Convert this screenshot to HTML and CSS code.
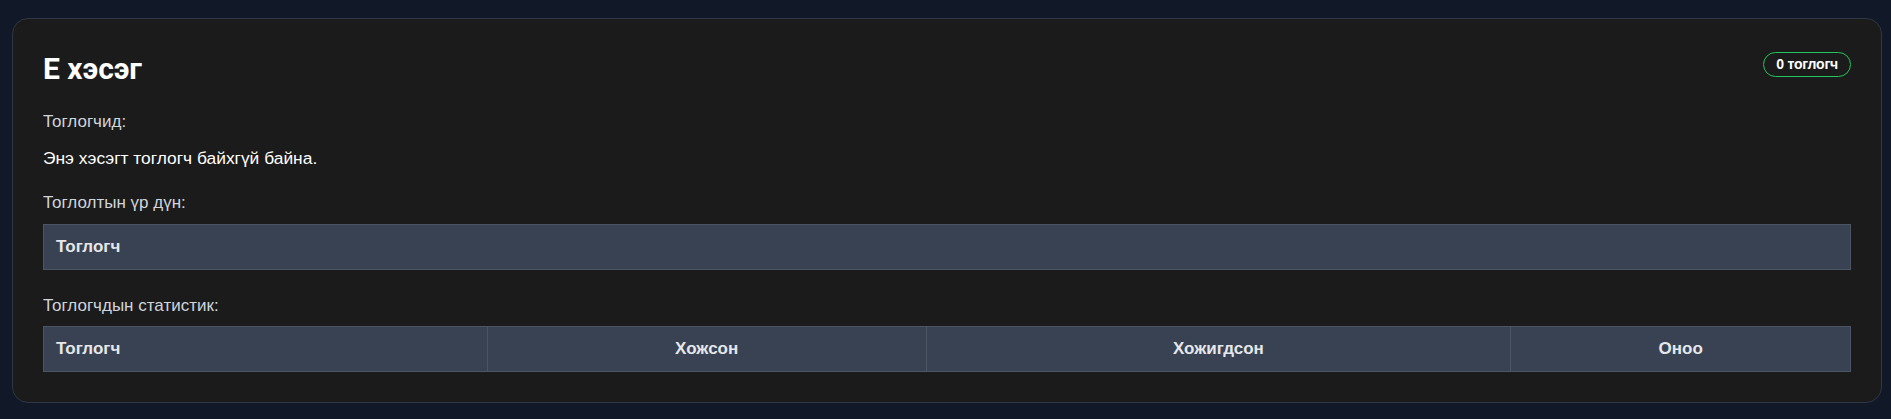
FILE: index.html
```html
<!DOCTYPE html>
<html lang="mn">
<head>
<meta charset="utf-8">
<title>Е хэсэг</title>
<link rel="stylesheet" href="styles.css">
</head>
<body>
<div class="page">
  <section class="card">
    <header class="card-head">
      <h2 class="title">Е хэсэг</h2>
      <span class="badge">0 тоглогч</span>
    </header>
    <p class="label label-first">Тоглогчид:</p>
    <p class="empty">Энэ хэсэгт тоглогч байхгүй байна.</p>
    <p class="label label-results">Тоглолтын үр дүн:</p>
    <table class="grid">
      <thead>
        <tr><th class="left">Тоглогч</th></tr>
      </thead>
    </table>
    <p class="label label-stats">Тоглогчдын статистик:</p>
    <table class="grid grid-stats">
      <colgroup>
        <col class="c-player">
        <col class="c-win">
        <col class="c-loss">
        <col class="c-points">
      </colgroup>
      <thead>
        <tr>
          <th class="left">Тоглогч</th>
          <th>Хожсон</th>
          <th>Хожигдсон</th>
          <th>Оноо</th>
        </tr>
      </thead>
    </table>
  </section>
</div>
</body>
</html>
```

FILE: styles.css
```css
* { box-sizing: border-box; }

html, body {
  margin: 0;
  padding: 0;
  background: #111827;
  font-family: "Liberation Sans", Arial, sans-serif;
  color: #d1d5db;
}

.page {
  padding: 18px 9px 10px 12px;
}

.card {
  background: #1b1b1b;
  border: 1px solid #2f3644;
  border-radius: 16px;
  padding: 30px 30px 30px 30px;
}

.card-head {
  display: flex;
  justify-content: space-between;
  align-items: flex-start;
  height: 61px;
}

.title {
  margin: 0;
  font-family: Roboto, "Liberation Sans", sans-serif;
  font-weight: 700;
  font-size: 30px;
  line-height: 40px;
  color: #ffffff;
}

.badge {
  margin-top: 3px;
  display: inline-block;
  height: 25px;
  padding: 0 12px;
  border: 1px solid #22c55e;
  border-radius: 999px;
  font-family: "Liberation Sans", Arial, sans-serif;
  font-weight: 700;
  font-size: 14px;
  line-height: 23px;
  letter-spacing: -0.2px;
  color: #ffffff;
}

.label {
  margin: 0;
  font-size: 17px;
  line-height: 24px;
  color: #d1d5db;
}

.empty {
  margin: 12px 0 0;
  font-size: 17.4px;
  line-height: 24px;
  color: #ffffff;
}

.label-results { margin-top: 21px; }
.label-stats { margin-top: 24px; }

.grid {
  width: 100%;
  border-collapse: collapse;
  margin-top: 9px;
}

.grid-stats {
  table-layout: fixed;
  margin-top: 8px;
}

.grid th {
  background: #394252;
  border: 1px solid #4b5563;
  padding: 12px 12px;
  font-size: 17px;
  line-height: 20px;
  font-weight: 700;
  color: #e5e7eb;
  text-align: center;
}

.grid th.left { text-align: left; }

.c-player { width: 24.56%; }
.c-win { width: 24.28%; }
.c-loss { width: 32.36%; }
.c-points { width: 18.8%; }
```
